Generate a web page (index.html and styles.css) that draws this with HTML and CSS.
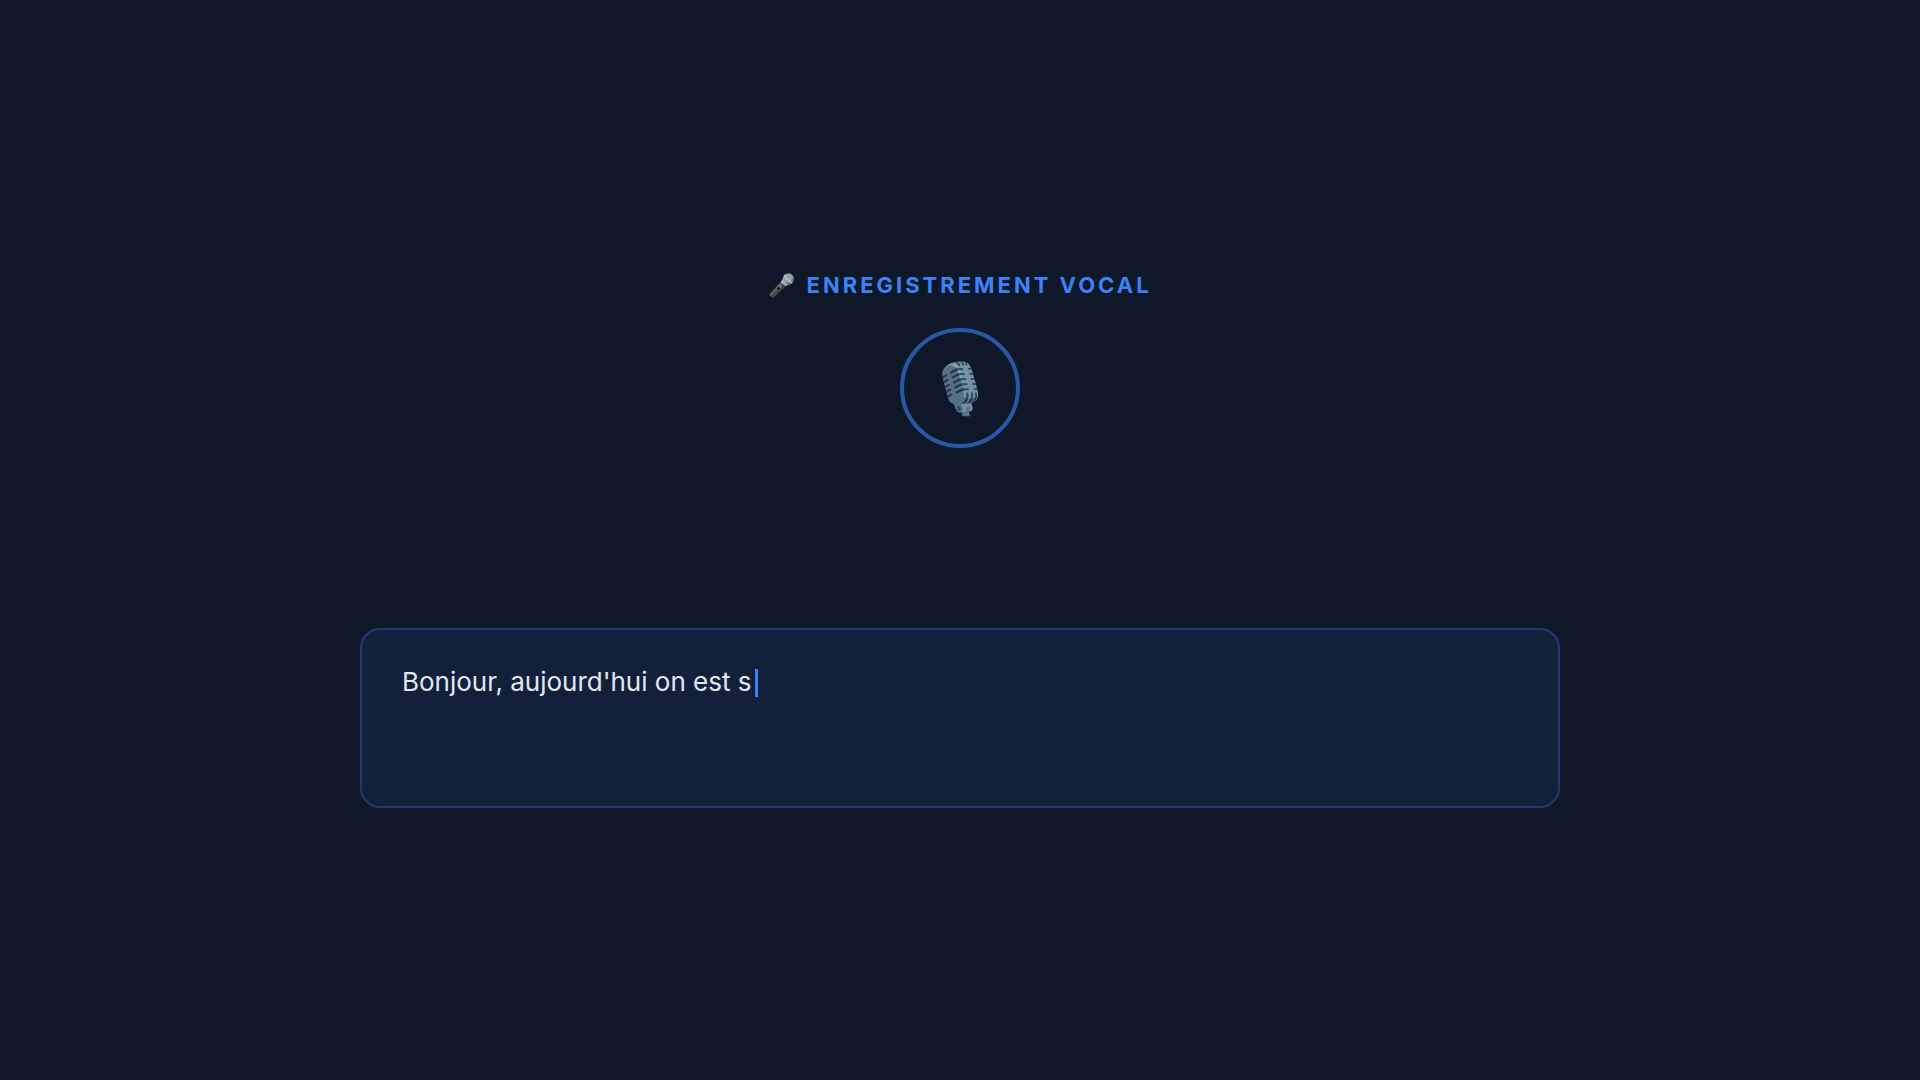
FILE: index.html
```html
<!DOCTYPE html>
<html lang="fr">
<head>
<meta charset="utf-8">
<title>Enregistrement vocal</title>
<link rel="stylesheet" href="styles.css">
</head>
<body>
<main class="screen">
  <div class="recorder">
    <div class="label">🎤 ENREGISTREMENT VOCAL</div>
    <div class="mic">🎙️</div>
  </div>
  <div class="transcript"><span>Bonjour, aujourd'hui on est s</span><span class="caret"></span></div>
</main>
</body>
</html>
```
FILE: styles.css
```css
* { box-sizing: border-box; }
html, body { margin: 0; height: 100%; }
body { background: #0f1829; color: #e2e8f0; font-family: Inter, "Noto Sans", sans-serif; }
.screen { height: 1080px; display: flex; flex-direction: column; align-items: center; justify-content: center; gap: 180px; }
.recorder { display: flex; flex-direction: column; align-items: center; gap: 29px; }
.label { font-size: 22px; line-height: 27px; font-weight: 700; letter-spacing: 3px; color: #3b82f6; }
.mic { width: 120px; height: 120px; border-radius: 50%; border: 4px solid #3b82f6; display: flex; align-items: center; justify-content: center; font-size: 50px; opacity: 0.6; }
.transcript { width: 1200px; height: 180px; padding: 32px 40px; background: #13203b; border: 2px solid #1e3a6e; border-radius: 20px; font-size: 26px; line-height: 39px; display: flex; align-items: flex-start; }
.caret { width: 3px; height: 28px; margin: 7px 0 0 3px; background: #3b82f6; }
```
